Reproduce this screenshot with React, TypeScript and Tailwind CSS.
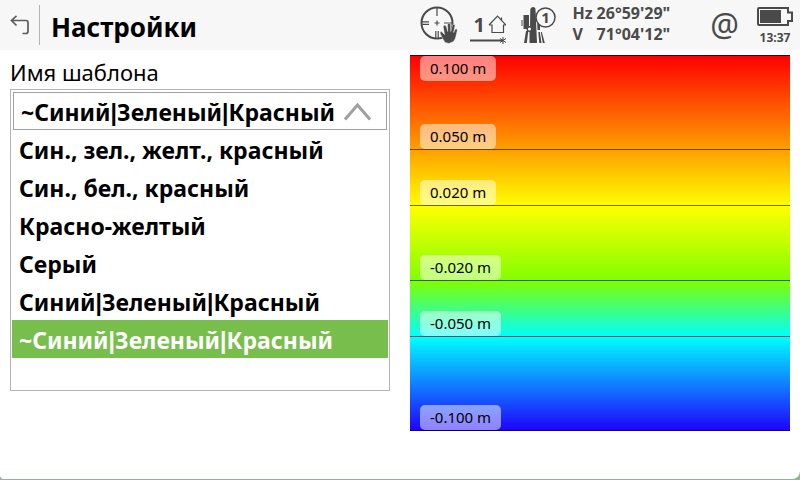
import React, { useState } from 'react';

const templates = [
    'Син., зел., желт., красный',
    'Син., бел., красный',
    'Красно-желтый',
    'Серый',
    'Синий|Зеленый|Красный',
    '~Синий|Зеленый|Красный'
];

const bands = [
    { top: '0.100 m', bottom: '0.050 m', className: 'grow-[94] from-[#ff0000] to-[#ffa000]' },
    { bottom: '0.020 m', className: 'grow-[56] from-[#ffa000] to-[#ffff00]' },
    { bottom: '-0.020 m', className: 'grow-[75] from-[#ffff00] to-[#80ff00]' },
    { bottom: '-0.050 m', className: 'grow-[56] from-[#80ff00] to-[#00ffff]' },
    { bottom: '-0.100 m', className: 'grow-[94] from-[#00ffff] to-[#2000ff]' }
];

const BackIcon = () => (
    <svg width="20" height="20" viewBox="0 0 20 20" fill="none" stroke="#5c5c5c" strokeWidth="1.7">
        <path d="M6.5 0.8 1.5 5.5 6.5 10.5M1.5 5.5H16Q18 5.5 18 7.5V16Q18 18.5 16 18.5H12.5" />
    </svg>
);

const AimIcon = () => (
    <svg width="38" height="38" viewBox="0 0 38 38" fill="none" stroke="#4a4a4a">
        <circle cx="17" cy="17" r="15.5" strokeWidth="2" />
        <path strokeWidth="1.2" d="M17 2v8M2 15.8h7M2 18.4h7M24 17h8M15.8 25v7M18.2 25v7M14.5 17h5M17 14.5v5" />
        <path
            fill="#4a4a4a"
            stroke="#f7f7f7"
            strokeWidth="0.5"
            d="M25 36.5C23 33 20 28 20 26.5Q21 24.5 23 27L24.5 28.5 23.2 20.5Q24.5 17.5 26.4 20.5L27.7 25.5 27.6 18Q29 16 30.6 18L30.7 25.5 32.4 19Q34.2 17.500 35 19.5L33.7 26.5 35 23.2Q37.400 22 37.300 24.500C36 29 36 33 33.500 35.500L29 37.500Z"
        />
    </svg>
);

const StationIcon = () => (
    <svg width="36" height="30" viewBox="0 0 36 30" fill="none" stroke="#4a4a4a">
        <path strokeWidth="1.2" d="M19 10 27.5 1 36 10M19 10H22V17.5H33.5V10H36M31.5 2.5V5" />
        <path strokeWidth="2" d="M0 25.5H33" />
        <path strokeWidth="1" d="M33 22V29M30 23.5 36 27.5M36 23.5 30 27.5" />
    </svg>
);

const InstrumentIcon = () => (
    <svg width="36" height="38" viewBox="0 0 36 38" fill="#4a4a4a">
        <path d="M9.3 3.500Q9.500 1 12 1T14.500 3.500L16 37H8.500V27L9 21Z" />
        <path d="M2.500 9H8V23H2.500ZM0.500 14H1.500V20H0.500ZM15.800 9H19V24H16.500Z" />
        <path d="M5 25H7.300L5.800 37H3ZM17.300 26H18.800L20.500 37H18.300ZM19.800 26H20.800L23.800 37H21.800Z" />
        <circle cx="8.5" cy="23" r="2.3" fill="#f7f7f7" stroke="#4a4a4a" strokeWidth="1.5" />
        <circle cx="24.5" cy="11.5" r="9.500" fill="#f7f7f7" stroke="#4a4a4a" strokeWidth="1.5" />
        <text x="24.5" y="17" textAnchor="middle" fontSize="15" fontWeight="700">1</text>
    </svg>
);

const BatteryIcon = () => (
    <svg width="36" height="20" viewBox="0 0 36 20" fill="none" stroke="#4a4a4a" strokeWidth="2">
        <path d="M2 1H31V5.5H35V14H31V18H2Q1 18 1 17V2Q1 1 2 1Z" />
        <path d="M3 3H24V16H3Z" fill="#4a4a4a" stroke="none" />
    </svg>
);

const Header = () => (
    <header className="flex h-[50px] items-center bg-[#f7f7f7] text-[#4a4a4a]">
        <button type="button" aria-label="Назад" className="flex h-10 w-10 items-center border-r border-[#b4b4b4] pl-[10px]">
            <BackIcon />
        </button>
        <h1 className="grow pt-1 pl-[11px] text-[26px] leading-8 font-bold text-black">Настройки</h1>
        <div className="flex h-full items-start">
            <div className="pt-[6px]"><AimIcon /></div>
            <div className="relative ml-3 pt-[15px]">
                <span className="absolute top-[15px] left-1 text-xl leading-5 font-bold">1</span>
                <StationIcon />
            </div>
            <div className="ml-[15px] pt-[6px]"><InstrumentIcon /></div>
            <dl className="ml-4 grid grid-cols-[24px_auto] pt-[3px] text-base leading-[21px] font-bold">
                <dt>Hz</dt>
                <dd>26°59'29"</dd>
                <dt>V</dt>
                <dd>71°04'12"</dd>
            </dl>
            <span className="ml-10 pt-[7px] text-[32px] leading-9">@</span>
            <div className="mr-[7px] ml-[18px] flex flex-col items-center pt-[7px]">
                <BatteryIcon />
                <time className="text-xs leading-[22px] font-bold">13:37</time>
            </div>
        </div>
    </header>
);

const TemplateName = ({ name }: { name: string }) => (
    <span>
        {name.split('|').map((part, index) => (
            <React.Fragment key={index}>
                {index > 0 && <span className="font-['Liberation_Sans',sans-serif] leading-none">|</span>}
                {part}
            </React.Fragment>
        ))}
    </span>
);

const TemplateSelect = () => {
    const [open, setOpen] = useState(true);
    const [selected, setSelected] = useState(templates[5]);

    return (
        <div>
            <label htmlFor="template" className="block text-[22px] leading-[34px]">Имя шаблона</label>
            <div className="border border-[#b4b4b4] px-px pt-[2px] pb-8 text-[23px] leading-8 font-bold">
                <button
                    id="template"
                    type="button"
                    aria-haspopup="listbox"
                    aria-expanded={open}
                    onClick={() => setOpen(!open)}
                    className="mx-px flex h-[38px] w-[calc(100%-2px)] items-center justify-between border border-[#a0a0a0] pt-px pr-[15px] pl-[7px] whitespace-nowrap"
                >
                    <TemplateName name={selected} />
                    <svg width="27" height="18" viewBox="0 0 27 18" fill="none" stroke="#a0a0a0" strokeWidth="3">
                        <path d="M1 16.5 13.5 2 26 16.5" />
                    </svg>
                </button>
                {open && (
                    <ul role="listbox" aria-label="Имя шаблона">
                        {templates.map((name) => (
                            <li
                                key={name}
                                role="option"
                                aria-selected={name === selected}
                                onClick={() => setSelected(name)}
                                className="flex h-[38px] cursor-pointer items-center pt-[2px] pl-[7px] whitespace-nowrap aria-selected:bg-[#78be4c] aria-selected:text-white"
                            >
                                <TemplateName name={name} />
                            </li>
                        ))}
                    </ul>
                )}
            </div>
        </div>
    );
};

const LevelLabel = ({ children }: { children: React.ReactNode }) => (
    <span className="rounded-[5px] bg-white/50 px-[10px] text-[15px] leading-[25px]">{children}</span>
);

const App: React.FC = () => {
    return (
        <div className="flex min-h-screen flex-col bg-[#93b596] pb-px font-['Noto_Sans','Open_Sans',sans-serif] text-black">
            <div className="grow rounded-br-lg rounded-bl-[4px] bg-white">
                <Header />
                <main className="grid grid-cols-2 gap-5 px-[10px] pt-[5px]">
                    <TemplateSelect />

                    {/* Color scale */}
                    <section aria-label="Цветовая шкала" className="flex h-[376px] flex-col border-t border-[#400000]">
                        {bands.map((band) => (
                            <div
                                key={band.bottom}
                                className={`flex basis-0 flex-col items-start border-b border-black/60 bg-linear-to-b/srgb bg-origin-border pl-[10px] ${band.className}`}
                            >
                                {band.top && <LevelLabel>{band.top}</LevelLabel>}
                                <div className="mt-auto flex">
                                    <LevelLabel>{band.bottom}</LevelLabel>
                                </div>
                            </div>
                        ))}
                    </section>
                </main>
            </div>
        </div>
    );
};

export default App;
